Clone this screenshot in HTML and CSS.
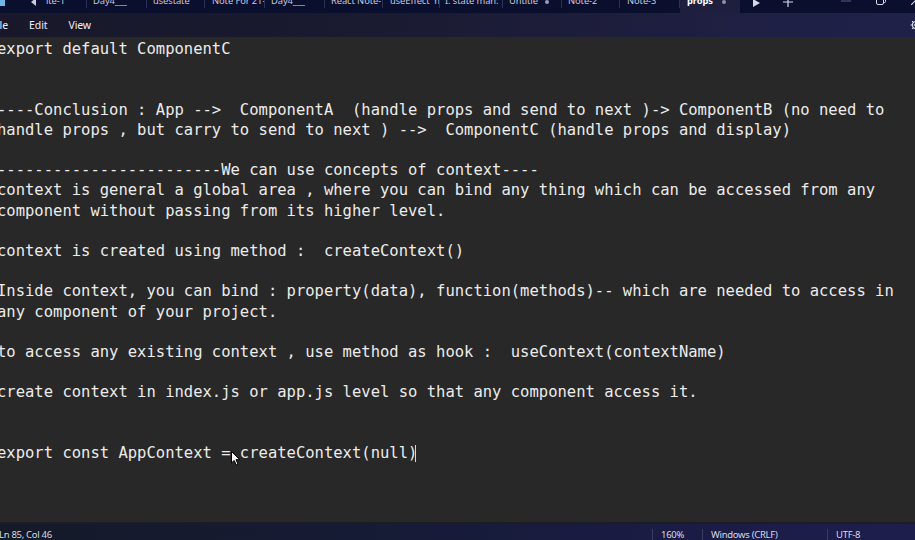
FILE: index.html
```html
<!DOCTYPE html>
<html>
<head>
<meta charset="utf-8">
<link rel="stylesheet" href="styles.css">
</head>
<body>
<div class="window">
  <div class="tabbar">
    <div class="appicon"></div>
    <div class="scroll-btn">
      <svg width="6" height="8" viewBox="0 0 6 8"><path d="M5 0 L0 4 L5 8 Z" fill="#c9cbe0"/></svg>
    </div>
    <div class="tab w47"><span class="label">ite-1</span></div>
    <div class="tab w60"><span class="label">Day4___</span></div>
    <div class="tab w58"><span class="label">usestate</span></div>
    <div class="tab w60 p7"><span class="label">Note For 21-</span></div>
    <div class="tab w60"><span class="label">Day4___</span></div>
    <div class="tab w58"><span class="label">React Note-</span></div>
    <div class="tab w57 p7"><span class="label">useEffect&nbsp;&nbsp;h</span></div>
    <div class="tab w63 p5"><span class="label">I. state man:</span></div>
    <div class="tab w59"><span class="label">Untitle</span><span class="dot"></span></div>
    <div class="tab w58"><span class="label">Note-2</span></div>
    <div class="tab w60 p7"><span class="label">Note-3</span></div>
    <div class="tab w60 p7 active"><span class="label">props</span><span class="dot"></span></div>
    <div class="tab-tools">
      <svg class="play" width="7" height="8" viewBox="0 0 7 8"><path d="M0 0 L7 4 L0 8 Z" fill="#d6d8ea"/></svg>
      <svg class="plus" width="10" height="10" viewBox="0 0 10 10"><path d="M5 0 V10 M0 5 H10" stroke="#d6d8ea" stroke-width="1.2"/></svg>
    </div>
    <div class="caption">
      <svg class="cap-min" width="10" height="2" viewBox="0 0 10 2"><path d="M0 1 H10" stroke="#5c5f80" stroke-width="1"/></svg>
      <svg class="cap-restore" width="10" height="10" viewBox="0 0 10 10"><rect x="0.5" y="2.5" width="7" height="7" rx="1.5" fill="none" stroke="#d6d8ea" stroke-width="1"/><path d="M2.5 2.5 V1.5 Q2.5 0.5 3.5 0.5 H8.5 Q9.5 0.5 9.5 1.5 V6.5 Q9.5 7.5 8.5 7.5 H7.5" fill="none" stroke="#d6d8ea" stroke-width="1"/></svg>
      <svg class="cap-close" width="10" height="10" viewBox="0 0 10 10"><path d="M0 0 L10 10 M10 0 L0 10" stroke="#d6d8ea" stroke-width="1.1"/></svg>
    </div>
  </div>
  <div class="menubar">
    <span class="menu first">ile</span>
    <span class="menu">Edit</span>
    <span class="menu">View</span>
    <span class="spacer"></span>
    <svg class="gear" width="12" height="12" viewBox="0 0 12 12"><circle cx="6" cy="6" r="3.6" fill="none" stroke="#d6d8ea" stroke-width="1.2"/><circle cx="6" cy="6" r="1.4" fill="none" stroke="#d6d8ea" stroke-width="1"/><path d="M6 0.5 V2.4 M6 9.6 V11.5 M0.5 6 H2.4 M9.6 6 H11.5 M2.1 2.1 L3.4 3.4 M8.6 8.6 L9.9 9.9 M2.1 9.9 L3.4 8.6 M8.6 3.4 L9.9 2.1" stroke="#d6d8ea" stroke-width="1.2"/></svg>
  </div>
  <div class="editor">
<pre class="code">export default ComponentC


----Conclusion : App -->  ComponentA  (handle props and send to next )-> ComponentB (no need to
handle props , but carry to send to next ) -->  ComponentC (handle props and display)

------------------------We can use concepts of context----
context is general a global area , where you can bind any thing which can be accessed from any
component without passing from its higher level.

context is created using method :  createContext()

Inside context, you can bind : property(data), function(methods)-- which are needed to access in
any component of your project.

to access any existing context , use method as hook :  useContext(contextName)

create context in index.js or app.js level so that any component access it.


export const AppContext = createContext(null)<span class="caret"></span></pre>
    <svg class="pointer" width="10" height="15" viewBox="0 0 10 15"><path d="M0.5 0.5 L0.5 12 L3.2 9.4 L5.2 14 L7 13.2 L5 8.7 L8.8 8.7 Z" fill="#ffffff" stroke="#000000" stroke-width="1"/></svg>
  </div>
  <div class="statusbar">
    <span class="st pos">Ln 85, Col 46</span>
    <span class="spacer"></span>
    <span class="sep"></span>
    <span class="st zoom">160%</span>
    <span class="sep"></span>
    <span class="st eol">Windows (CRLF)</span>
    <span class="sep"></span>
    <span class="st enc">UTF-8</span>
  </div>
</div>
</body>
</html>
```

FILE: styles.css
```css
* { box-sizing: border-box; }
html, body {
  margin: 0;
  padding: 0;
  width: 915px;
  height: 540px;
  overflow: hidden;
  background: #282828;
}
.window {
  width: 915px;
  height: 540px;
  display: flex;
  flex-direction: column;
  font-family: "Noto Sans", "Open Sans", sans-serif;
}

/* ---------- tab bar ---------- */
.tabbar {
  height: 13px;
  flex: 0 0 13px;
  display: flex;
  background: #0b0f2e;
  overflow: hidden;
  position: relative;
}
.appicon {
  width: 5px;
  height: 6px;
  background: #6fb6ea;
  flex: 0 0 5px;
}
.scroll-btn {
  width: 35px;
  flex: 0 0 35px;
  display: flex;
  justify-content: flex-start;
  padding-left: 26px;
}
.scroll-btn svg { margin-top: -2px; }
.tab {
  height: 13px;
  display: flex;
  align-items: flex-start;
  padding-left: 6px;
  overflow: hidden;
  white-space: nowrap;
  flex: 0 0 auto;
  position: relative;
}
.tab::after {
  content: "";
  position: absolute;
  right: 0;
  top: 0;
  width: 1px;
  height: 8px;
  background: #2c3256;
}
.tab .label {
  font-size: 9.4px;
  letter-spacing: -0.1px;
  line-height: 14px;
  margin-top: -6px;
  color: #c4c6dc;
  overflow: hidden;
  min-width: 0;
  flex: 0 1 auto;
}
.w47 { width: 47px; }
.w57 { width: 57px; }
.w58 { width: 58px; }
.w59 { width: 59px; }
.w60 { width: 60px; }
.w63 { width: 63px; }
.p5 { padding-left: 5px; }
.p7 { padding-left: 7px; }
.tab .dot {
  width: 4px;
  height: 4px;
  border-radius: 50%;
  background: #9a9cb4;
  margin-left: auto;
  margin-right: 13px;
  flex: 0 0 4px;
}
.tab.active {
  background: #1e1f3e;
}
.tab.active::after { display: none; }
.tab.active .label {
  color: #ffffff;
  font-weight: 700;
}
.tab.active .dot { margin-right: 14px; background: #8f91a8; }
.tab-tools {
  display: flex;
  align-items: flex-start;
  padding-left: 13px;
  gap: 23px;
}
.tab-tools .play { margin-top: -1px; }
.tab-tools .plus { margin-top: -3px; }
.caption {
  margin-left: auto;
  display: flex;
  align-items: flex-start;
  gap: 25px;
  margin-right: -6px;
}
.caption .cap-restore { margin-top: -5px; }
.caption .cap-close { margin-top: -5px; }

/* ---------- menu bar ---------- */
.menubar {
  height: 24px;
  flex: 0 0 24px;
  display: flex;
  align-items: center;
  background: linear-gradient(90deg, #18182a 0%, #1a1a30 40%, #1e1f40 75%, #20214a 100%);
  gap: 21px;
}
.menu {
  font-size: 10.5px;
  color: #eceef8;
  line-height: 24px;
  letter-spacing: -0.1px;
}
.menu.first { margin-left: -3px; }
.spacer { flex: 1; }
.gear { margin-right: -7px; }

/* ---------- editor ---------- */
.editor {
  flex: 1;
  background: #282828;
  position: relative;
  overflow: hidden;
}
.code {
  margin: 0 0 0 -3px;
  padding-top: 2px;
  font-family: "DejaVu Sans Mono", "Liberation Mono", monospace;
  font-size: 15.52px;
  line-height: 20.2px;
  color: #ececec;
  white-space: pre;
}
.caret {
  display: inline-block;
  width: 1px;
  height: 17px;
  background: #d8d8d8;
  vertical-align: -4px;
  margin-left: -2px;
}
.pointer {
  position: absolute;
  left: 231px;
  top: 414px;
}

/* ---------- status bar ---------- */
.statusbar {
  height: 18px;
  flex: 0 0 18px;
  display: flex;
  align-items: center;
  padding-top: 5px;
  background: linear-gradient(90deg, #141a28 0%, #161b35 40%, #1a1c45 75%, #1e1e4c 100%);
  border-top: 2px solid #1c1c22;
}
.st {
  font-size: 9.5px;
  letter-spacing: -0.3px;
  color: #d6d8e6;
  line-height: 12px;
  white-space: nowrap;
}
.pos { margin-left: -1px; }
.sep {
  width: 1px;
  height: 11px;
  background: #3a3d60;
  align-self: flex-end;
}
.zoom { padding-left: 8px; width: 49px; }
.eol { padding-left: 8px; width: 124px; }
.enc { padding-left: 8px; width: 87px; }
```
